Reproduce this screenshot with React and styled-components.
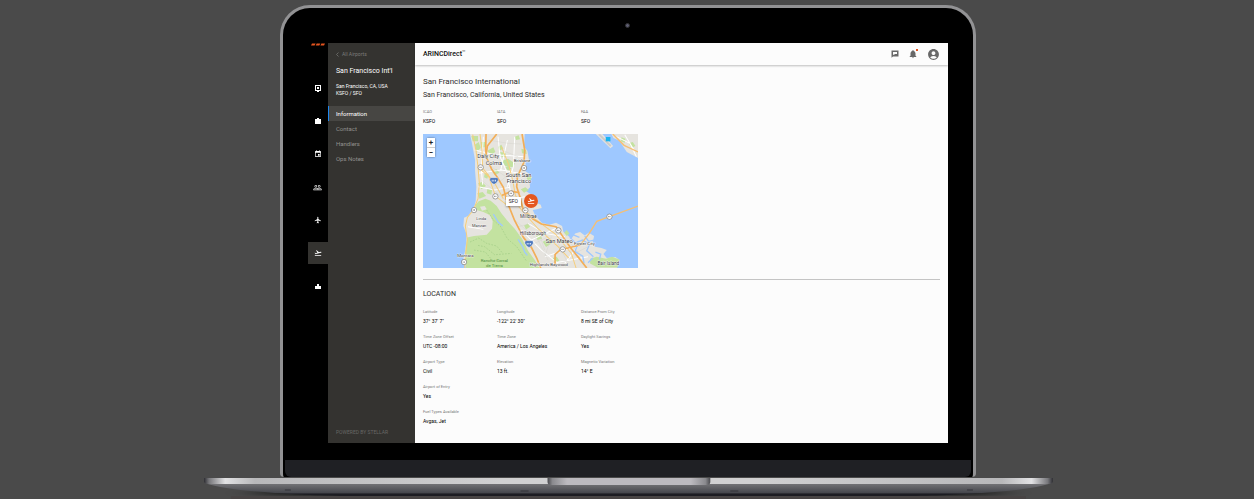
import React, { useState } from "react";
import styled, { createGlobalStyle } from "styled-components";
import {
  MdAccountCircle,
  MdEvent,
  MdFlight,
  MdFlightTakeoff,
  MdNotifications,
  MdPeopleOutline,
} from "react-icons/md";

const GlobalStyle = createGlobalStyle`
  * {
    box-sizing: border-box;
  }
  body {
    margin: 0;
    background-color: #4a4a4a;
    font-family: Roboto, "Liberation Sans", sans-serif;
  }
  button {
    border: 0;
    padding: 0;
    font-family: inherit;
    cursor: pointer;
  }
  svg {
    display: block;
  }
`;

const Page = styled.div`
  display: flex;
  flex-direction: column;
  align-items: center;
  min-height: 100vh;
  padding: 5px 0 0 2px;
  overflow: hidden;
`;

const Lid = styled.div`
  width: 55.6%;
  min-width: 600px;
  padding: 0 25px;
  border: 3px solid #929294;
  border-bottom: 0;
  border-radius: 30px 30px 4px 4px;
  background-color: #000;
`;

const Camera = styled.div`
  width: 5px;
  height: 5px;
  margin: 15px auto;
  border-radius: 50%;
  border: 1px solid #303033;
  background-color: #5c5c70;
`;

const Chin = styled.div`
  height: 17px;
  margin: 17px -23px 0;
  border-radius: 0 0 6px 6px;
  background-color: #1f2024;
`;

const Base = styled.svg`
  width: 67.8%;
  min-width: 740px;
  height: 22px;
  overflow: visible;
`;

const Screen = styled.div`
  display: flex;
`;

const Rail = styled.nav`
  display: flex;
  flex-direction: column;
  align-items: center;
  gap: 11px;
  width: 20px;
`;

const Logo = styled.svg`
  width: 14px;
  height: 3px;
  margin-bottom: 20px;
`;

const RailButton = styled.button`
  display: flex;
  align-items: center;
  justify-content: center;
  width: 20px;
  height: 22px;
  color: #fff;
  background-color: ${(props) => (props.$active ? "#343330" : "transparent")};
`;

const Sidebar = styled.aside`
  display: flex;
  flex-direction: column;
  width: 87px;
  background-color: #343330;
  color: #fff;
`;

const BackLink = styled.a`
  display: flex;
  align-items: center;
  gap: 3px;
  padding: 7px 8px 0;
  font-size: 5px;
  line-height: 8px;
  color: #7d7c7a;
  text-decoration: none;
`;

const SidebarTitle = styled.h2`
  margin: 8px 8px 0;
  font-size: 7px;
  line-height: 10px;
  font-weight: 400;
`;

const SidebarText = styled.p`
  margin: 7px 8px 9px;
  font-size: 5px;
  line-height: 7px;
`;

const SidebarLink = styled.a`
  padding-left: 8px;
  font-size: 6px;
  line-height: 15px;
  text-decoration: none;
  color: ${(props) => (props.$active ? "#fff" : "#92918f")};
  background-color: ${(props) => (props.$active ? "#474643" : "transparent")};
  box-shadow: ${(props) => (props.$active ? "inset 1px 0 #1e88f0" : "none")};
`;

const Powered = styled.footer`
  margin: auto 8px 7px;
  font-size: 5px;
  line-height: 8px;
  color: #686765;
`;

const Main = styled.main`
  flex: 1;
  min-width: 0;
  background-color: #fcfcfc;
  color: #2b2b2b;
`;

const Header = styled.header`
  display: flex;
  align-items: center;
  height: 22px;
  padding: 0 8px;
  box-shadow: 0 1px 2px rgba(0, 0, 0, 0.25);
`;

const Brand = styled.span`
  margin-right: auto;
  font-size: 7px;
  line-height: 10px;
  font-weight: 500;
  color: #111;

  sup {
    font-size: 4px;
    line-height: 0;
  }
`;

const HeaderActions = styled.div`
  display: flex;
  align-items: center;
  gap: 9px;
`;

const HeaderButton = styled.button`
  position: relative;
  background: none;
  color: #686868;
`;

const Dot = styled.span`
  position: absolute;
  top: 0;
  right: 0;
  width: 2px;
  height: 2px;
  background-color: #e4541f;
`;

const Content = styled.div`
  padding: 12px 8px 17px;
`;

const Title = styled.h1`
  margin: 0;
  font-size: 8px;
  line-height: 10px;
  font-weight: 400;
`;

const Subtitle = styled.p`
  margin: 3px 0 8px;
  font-size: 7px;
  line-height: 10px;
`;

const Fields = styled.dl`
  display: grid;
  grid-template-columns: 74px 84px 1fr;
  row-gap: 7px;
  margin: 0;
`;

const Field = styled.div`
  grid-column-start: ${(props) => props.$start || "auto"};

  dt {
    font-size: 4px;
    line-height: 8px;
    color: #777;
  }
  dd {
    margin: 0;
    font-size: 5px;
    line-height: 10px;
    color: #000;
  }
`;

const MapBox = styled.div`
  position: relative;
  width: 41.6%;
  min-width: 200px;
  margin-top: 8px;
`;

const MapDrawing = styled.svg`
  width: 100%;
  height: auto;
  font-size: 17px;
  font-family: Roboto, sans-serif;
`;

const ZoomControl = styled.div`
  position: absolute;
  top: 4px;
  left: 4px;
  display: flex;
  flex-direction: column;
  gap: 1px;
  border-radius: 1px;
  background-color: #ccc;
  box-shadow: 0 0 2px rgba(0, 0, 0, 0.6);

  button {
    width: 8px;
    height: 9px;
    font-size: 8px;
    line-height: 8px;
    font-weight: 700;
    color: #222;
    background-color: #fff;
  }
`;

const Marker = styled.div`
  position: absolute;
  top: 45%;
  left: 38.5%;
  display: flex;
  align-items: center;
  gap: 3px;
`;

const MarkerLabel = styled.span`
  width: 15px;
  font-size: 5px;
  line-height: 9px;
  text-align: center;
  color: #222;
  background-color: #fff;
  box-shadow: 0 1px 2px rgba(0, 0, 0, 0.4);
`;

const MarkerButton = styled.button`
  display: flex;
  align-items: center;
  justify-content: center;
  width: 14px;
  height: 14px;
  border-radius: 50%;
  color: #fff;
  background-color: #e4561f;
`;

const Divider = styled.hr`
  height: 1px;
  margin: 11px 0 9px;
  border: 0;
  background-color: #c4c4c4;
`;

const SectionTitle = styled.h3`
  margin: 0 0 9px;
  font-size: 7px;
  line-height: 10px;
  font-weight: 400;
`;

const ContactIcon = () => (
  <svg width="8" height="8" viewBox="0 0 8 8">
    <path
      fill="currentColor"
      fillRule="evenodd"
      d="M1 1h6v6H5v1H3V7H1zM2 2v4h4V2zM3 3h2v2H3z"
    />
  </svg>
);

const BagIcon = () => (
  <svg width="8" height="8" viewBox="0 0 8 8">
    <path fill="currentColor" d="M1 2h2V1h2v1h2v5H1z" />
  </svg>
);

const StatsIcon = () => (
  <svg width="8" height="8" viewBox="0 0 8 8">
    <path fill="currentColor" d="M1 4h2V2h2v2h2v3H1z" />
  </svg>
);

const ChatIcon = () => (
  <svg width="8" height="8" viewBox="0 0 8 8">
    <path
      fill="currentColor"
      fillRule="evenodd"
      d="M0.5 0.5h7v6H2l-1.5 1.3zM2 2v2.7h1.5V4H6V2z"
    />
  </svg>
);

const railItems = [
  { label: "Contacts", icon: <ContactIcon /> },
  { label: "Trips", icon: <BagIcon /> },
  { label: "Calendar", icon: <MdEvent size={8} /> },
  { label: "Crew", icon: <MdPeopleOutline size={9} /> },
  { label: "Aircraft", icon: <MdFlight size={8} /> },
  { label: "Airports", icon: <MdFlightTakeoff size={8} /> },
  { label: "Reports", icon: <StatsIcon /> },
];

const pages = ["Information", "Contact", "Handlers", "Ops Notes"];

const codes = [
  ["ICAO", "KSFO"],
  ["IATA", "SFO"],
  ["FAA", "SFO"],
];

const location = [
  ["Latitude", "37° 37' 7\""],
  ["Longitude", "-122° 22' 30\""],
  ["Distance From City", "8 mi SE of City"],
  ["Time Zone Offset", "UTC -08:00"],
  ["Time Zone", "America / Los Angeles"],
  ["Daylight Savings", "Yes"],
  ["Airport Type", "Civil"],
  ["Elevation", "13 ft."],
  ["Magnetic Variation", "14° E"],
  ["Airport of Entry", "Yes", 1],
  ["Fuel Types Available", "Avgas, Jet", 1],
];

const places = [
  [178, 84, "Daly City"],
  [203, 105, "Colma"],
  [287, 97, "Brisbane", 13],
  [263, 140, "South San"],
  [266, 158, "Francisco"],
  [306, 263, "Millbrae", 14],
  [305, 315, "Hillsborough", 14],
  [383, 338, "San Mateo"],
  [468, 346, "Foster City", 13],
  [118, 380, "Montara", 13],
  [175, 270, "Linda", 12],
  [162, 291, "Manzan", 12],
  [335, 409, "Highlands-Baywood", 13],
  [538, 404, "Bair Island", 14],
];

const shields = [
  [188, 112],
  [232, 199],
  [168, 240],
  [318, 114],
  [279, 190],
  [322, 241],
  [421, 301],
  [434, 358],
  [574, 260],
  [138, 396],
];

const AirportMap = () => (
  <MapDrawing viewBox="15 12 645 402" role="img" aria-label="Airport map">
    <rect x="15" y="12" width="645" height="402" fill="#9ec8ff" />
    <path
      fill="#e6e4df"
      d="M156 12L161 36 166 62 171 90 171 122 175 170 173 212 170 226 161 243 150 258 138 263 136 288 146 313 144 340 141 363 136 385 144 414H596L604 390 592 381 566 384 556 372 566 360 550 354 531 350 524 338 528 318 512 308 500 316 486 306 471 310 460 326 451 318 436 306 432 288 414 278 394 284 371 278 351 256 344 240 356 238 371 234 368 224 358 220 360 206 344 196 324 184 336 172 334 152 342 142 334 132 322 124 324 108 322 98 333 90 328 62 318 50 320 12z"
    />
    <path fill="#e6e4df" d="M533 12L577 55 585 48 553 12zM580 12L586 24 604 32 626 66 660 84V12z" />
    <path fill="#cbcbcb" d="M540 14l36 36 4-4-34-34z" />
    <g fill="#c3e2a0">
      <path d="M171 226L182 214 202 206 218 212 236 228 250 250 268 272 290 296 312 326 330 362 350 390 364 414H144L141 370 147 322 168 318 206 314 222 296 224 274 216 256 196 246 176 240z" />
      <path d="M160 18h20v16h-16zM170 44l12-8 6 18-12 12zM188 36h14v16h-14zM208 62l18-10 6 14-16 10zM240 50l10-6 6 12-12 6zM246 66l16 2 2 14-14-2zM250 92l20-6 20 14-4 12-24-4zM180 160l12-4 12 12-14 10zM178 190l16-4 10 12-20 8zM208 176l14 4-2 14-14-4zM222 122l14-4 8 10-14 8zM200 130l12 2-4 14-10-4zM262 112l10-4 8 8-10 6zM310 56l14 4 2 12-14-2zM328 136l12 2-2 14-12-4zM308 178l14-6 10 8-14 8zM290 20l12-4 4 12-12 2zM374 335l16-8 12 12-18 12zM354 316l14-2 4 12-14 4zM318 286l12-6 6 10-12 8zM322 372l14 6-2 16-14-6zM446 300l8 10-8 8-8-10zM610 22l12 4-2 12-12-4zM632 40l12-4 8 12-12 6zM516 386l20-6 28 6 18-6 22 8-6 24h-60l-22-12zM404 384l12-4 8 12-14 6z" />
    </g>
    <g fill="#e6e4df">
      <path d="M152 270l16-8 34 8 14 20-22 18-42 4-10-24z" />
      <path d="M186 230l14-2 6 10-14 4z" />
    </g>
    <g fill="none" stroke="#9fca83" strokeWidth="2" strokeDasharray="5 4">
      <path d="M156 336l26-12 24 16 30 8 18 22M206 240l20 30 22 20 20 36 28 24 30 44M168 360l34 6 20 24 50 4M180 346l20 4 30 24 50 -4" />
    </g>
    <g fill="none" stroke="#fff" strokeWidth="3">
      <path d="M170 60l60 14 88 6M180 130l70-10 66 12M196 20l-6 100 4 44M240 20l6 60 22 50 10 60M268 30l-20 90M290 20l-4 90-18 60M180 170l50 10 46-8M260 212l60-12M330 280l50 30 60 10M310 300l60 60 50 40M340 330l76-36M380 380l90-30M400 400l110-20M150 290l46 8M440 400l46-60M595 20l40 20 20 40M620 14l30 50" />
    </g>
    <g fill="none" stroke="#cfcdc8" strokeWidth="1">
      <path d="M210 30l60 10 40 2M204 100l60 40 40-10M224 170l40-30 30 20M190 150l60 50M250 60l50 20M290 270l70 60 30 60M300 290l40-10 60 50M360 300l20 60M400 320l-20 60M420 340l30 60M450 330l40 50M330 350l60-30M470 370l40-20" />
    </g>
    <path
      fill="none"
      stroke="#9ec8ff"
      strokeWidth="4"
      d="M455 322L472 338 494 330 514 344 506 362 526 380M478 348L470 364 494 378 498 400M500 318L512 334 528 330M464 314L484 322M532 366L548 372 544 388M510 398L524 384M226 252L240 276 254 288M300 328L314 350 320 366 328 376"
    />
    <g fill="none" stroke="#f6ce7c" strokeWidth="3">
      <path d="M164 14L174 62 180 112 184 160 180 206 166 240 148 262 142 288 148 330 142 380 140 414M186 12L192 60 194 114 230 160 256 206M188 118L212 140 232 198 268 226M250 50L272 104 284 150 292 196 318 242 352 268 412 312 460 370 474 414M302 230L360 296 420 350 452 384" />
    </g>
    <g fill="none" stroke="#f2ae58" strokeWidth="5" strokeLinejoin="round">
      <path d="M204 12L203 60 206 84 220 116 238 142 256 172 266 212 290 272 316 322 340 352 356 384 368 414" />
      <path d="M236 12L208 48 204 76M312 12L320 60 318 96 298 140 296 170 306 202 316 240 346 268 370 282 414 290 436 322 458 354 486 388 506 414" />
      <path d="M252 196L280 184 304 188M411 402L411 373 426 360 486 345" />
    </g>
    <path
      fill="none"
      stroke="#f6bf73"
      strokeWidth="4"
      d="M486 345L512 312 536 274 574 260 660 228M584 12L618 46 660 66"
    />
    {shields.map(([x, y]) => (
      <g key={x}>
        <circle cx={x} cy={y} r="8" fill="#fff" stroke="#777" strokeWidth="2" />
        <path d={`M${x - 4} ${y}h8`} stroke="#999" strokeWidth="4" strokeDasharray="3 1" />
      </g>
    ))}
    {[
      [228, 152],
      [333, 341],
    ].map(([x, y]) => (
      <g key={x}>
        <path
          fill="#4d78bd"
          stroke="#fff"
          strokeWidth="1"
          d={`M${x - 11} ${y - 9}h22l2 7-6 9-7 4-7-4-6-9z`}
        />
        <path d={`M${x - 7} ${y}h14`} stroke="#dce6f6" strokeWidth="5" strokeDasharray="3 2" />
      </g>
    ))}
    <path fill="#17b4f0" d="M563 21h14v13h-14z" />
    <g fill="#333" stroke="#fff" strokeWidth="2" paintOrder="stroke">
      {places.map(([x, y, name, size]) => (
        <text key={name} x={x} y={y} fontSize={size || 17}>
          {name}
        </text>
      ))}
    </g>
    <g fill="#4b8a3b" fontSize="13">
      <text x="188" y="396">
        Rancho Corral
      </text>
      <text x="204" y="411">
        de Tierra
      </text>
    </g>
  </MapDrawing>
);

const FieldList = ({ items }) => (
  <Fields>
    {items.map(([label, value, start]) => (
      <Field key={label} $start={start}>
        <dt>{label}</dt>
        <dd>{value}</dd>
      </Field>
    ))}
  </Fields>
);

const LaptopBase = () => (
  <Base viewBox="203 477 850 22" preserveAspectRatio="none" aria-hidden="true">
    <defs>
      <linearGradient id="edge">
        <stop offset="0" stopColor="#2e2e33" />
        <stop offset="0.006" stopColor="#77777b" />
        <stop offset="0.025" stopColor="#e2e2e4" />
        <stop offset="0.06" stopColor="#b8b8ba" />
        <stop offset="0.35" stopColor="#d0d0d1" />
        <stop offset="0.65" stopColor="#d0d0d1" />
        <stop offset="0.94" stopColor="#b8b8ba" />
        <stop offset="0.975" stopColor="#e2e2e4" />
        <stop offset="0.994" stopColor="#77777b" />
        <stop offset="1" stopColor="#2e2e33" />
      </linearGradient>
      <linearGradient id="notch">
        <stop offset="0" stopColor="#4a4a4e" />
        <stop offset="0.03" stopColor="#8a8a8e" />
        <stop offset="0.12" stopColor="#bcbabf" />
        <stop offset="0.88" stopColor="#bcbabf" />
        <stop offset="0.97" stopColor="#8a8a8e" />
        <stop offset="1" stopColor="#4a4a4e" />
      </linearGradient>
      <linearGradient id="body" x2="0" y2="1">
        <stop offset="0" stopColor="#77777a" />
        <stop offset="0.75" stopColor="#46474d" />
        <stop offset="0.85" stopColor="#1c1c22" />
        <stop offset="1" stopColor="#1c1c22" />
      </linearGradient>
      <filter id="soft" x="-10%" y="-200%" width="120%" height="500%">
        <feGaussianBlur stdDeviation="12 2" />
      </filter>
    </defs>
    <ellipse cx="628" cy="493" rx="385" ry="3" fill="#000" filter="url(#soft)" />
    <rect x="230" y="496" width="796" height="3" fill="#484444" />
    <path
      fill="url(#body)"
      d="M204 483h848c-14 5-40 8-70 10-30 2-50 3-84 3H358c-34 0-54-1-84-3-30-2-56-5-70-10z"
    />
    <path fill="url(#edge)" d="M203 478h850v4l-2 2H205l-2-2z" />
    <path fill="url(#notch)" d="M547 478h163v4q0 3-4 3H551q-4 0-4-3z" />
    <path stroke="#333338" d="M284 490h6M520 491h8M730 491h8M967 490h6" />
  </Base>
);

const App = () => {
  const [section, setSection] = useState("Airports");
  const [page, setPage] = useState("Information");

  return (
    <Page>
      <GlobalStyle />
      <Lid>
        <Camera />
        <Screen>
          <Rail>
            <Logo viewBox="0 0 14 3">
              <path fill="#e4541f" d="M1 .6h3.6l-1 1.8H0zM5.7.6h3.6l-1 1.8H4.7zM10.4.6H14l-1 1.8H9.4z" />
            </Logo>
            {railItems.map((item) => (
              <RailButton
                key={item.label}
                aria-label={item.label}
                $active={section === item.label}
                onClick={() => setSection(item.label)}
              >
                {item.icon}
              </RailButton>
            ))}
          </Rail>
          <Sidebar>
            <BackLink href="#airports">
              <svg width="3" height="5" viewBox="0 0 3 5">
                <path d="M2.5.5l-2 2 2 2" fill="none" stroke="currentColor" strokeWidth="0.7" />
              </svg>
              All Airports
            </BackLink>
            <SidebarTitle>San Francisco Int'l</SidebarTitle>
            <SidebarText>
              San Francisco, CA, USA
              <br />
              KSFO / SFO
            </SidebarText>
            {pages.map((name) => (
              <SidebarLink
                key={name}
                href="#page"
                $active={page === name}
                onClick={() => setPage(name)}
              >
                {name}
              </SidebarLink>
            ))}
            <Powered>POWERED BY STELLAR</Powered>
          </Sidebar>
          <Main>
            <Header>
              <Brand>
                ARINCDirect<sup>℠</sup>
              </Brand>
              <HeaderActions>
                <HeaderButton aria-label="Messages">
                  <ChatIcon />
                </HeaderButton>
                <HeaderButton aria-label="Notifications">
                  <MdNotifications size={10} />
                  <Dot />
                </HeaderButton>
                <HeaderButton aria-label="Account">
                  <MdAccountCircle size={13} />
                </HeaderButton>
              </HeaderActions>
            </Header>
            <Content>
              <Title>San Francisco International</Title>
              <Subtitle>San Francisco, California, United States</Subtitle>
              <FieldList items={codes} />
              <MapBox>
                <AirportMap />
                <ZoomControl>
                  <button aria-label="Zoom in">+</button>
                  <button aria-label="Zoom out">−</button>
                </ZoomControl>
                <Marker>
                  <MarkerLabel>SFO</MarkerLabel>
                  <MarkerButton aria-label="San Francisco International">
                    <MdFlightTakeoff size={8} />
                  </MarkerButton>
                </Marker>
              </MapBox>
              <Divider />
              <SectionTitle>LOCATION</SectionTitle>
              <FieldList items={location} />
            </Content>
          </Main>
        </Screen>
        <Chin />
      </Lid>
      <LaptopBase />
    </Page>
  );
};

export default App;
